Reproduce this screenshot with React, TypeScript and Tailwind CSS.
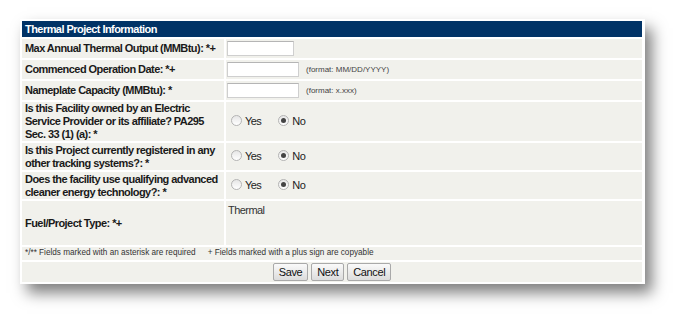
import type { ReactNode } from "react";

const cell = "bg-[#f1f1ec] flex items-center";

function Label({ children }: { children: ReactNode }) {
  return (
    <div className={`${cell} pl-[3px] pr-[4px] font-bold text-[11px] tracking-[-0.55px] leading-[13px] text-[#1a1a1a]`}>
      {children}
    </div>
  );
}

function TextBox({ width, hint }: { width: string; hint?: string }) {
  return (
    <div className={`${cell} pl-[1px] gap-[7px]`}>
      <div className={`${width} h-[15px] bg-white border border-[#cfcfcf] border-t-[#b5b5b5]`} />
      {hint && <span className="text-[8px] text-[#444]">{hint}</span>}
    </div>
  );
}

function Radio({ checked, label }: { checked?: boolean; label: string }) {
  return (
    <span className="flex items-center gap-[3px]">
      <span className="w-[11px] h-[11px] rounded-full border border-[#b4b4b4] bg-gradient-to-b from-[#e6e6e6] to-white flex items-center justify-center -mt-[2px]">
        {checked && <span className="w-[5px] h-[5px] rounded-full bg-[#444]" />}
      </span>
      <span className="text-[11px] tracking-[-0.55px] text-[#222]">{label}</span>
    </span>
  );
}

function YesNo() {
  return (
    <div className={`${cell} pl-[5px] gap-[17px]`}>
      <Radio label="Yes" />
      <Radio label="No" checked />
    </div>
  );
}

function Btn({ children }: { children: ReactNode }) {
  return (
    <button className="h-[18px] px-[5px] text-[11px] tracking-[-0.4px] leading-none text-[#111] border border-[#a9a9a9] rounded-[2px] bg-gradient-to-b from-[#fafafa] to-[#dcdcdc]">
      {children}
    </button>
  );
}

export default function App() {
  return (
    <div className="w-[687px] h-[327px] bg-white pl-[20px] pt-[19px] font-['Liberation_Sans',Arial,sans-serif]">
      <div className="w-[625px] bg-white p-[2px] pr-[3px] shadow-[7px_9px_14px_rgba(0,0,0,0.5)]">
        <div className="grid grid-cols-[202px_1fr] grid-rows-[16px_19px_19px_19px_39px_27px_27px_44px_13px_20px] gap-[2px]">
          <div className="col-span-2 bg-[#013366] text-white font-bold text-[11px] tracking-[-0.55px] pl-[3px] flex items-center">
            Thermal Project Information
          </div>

          <Label>Max Annual Thermal Output (MMBtu): *+</Label>
          <TextBox width="w-[67px]" />

          <Label>Commenced Operation Date: *+</Label>
          <TextBox width="w-[72px]" hint="(format: MM/DD/YYYY)" />

          <Label>Nameplate Capacity (MMBtu): *</Label>
          <TextBox width="w-[72px]" hint="(format: x.xxx)" />

          <Label>Is this Facility owned by an Electric Service Provider or its affiliate? PA295 Sec. 33 (1) (a): *</Label>
          <YesNo />

          <Label>Is this Project currently registered in any other tracking systems?: *</Label>
          <YesNo />

          <Label>Does the facility use qualifying advanced cleaner energy technology?: *</Label>
          <YesNo />

          <Label>Fuel/Project Type: *+</Label>
          <div className="bg-[#f1f1ec] pl-[2px] pt-[1px] text-[11px] tracking-[-0.55px] text-[#333]">Thermal</div>

          <div className="col-span-2 bg-[#f1f1ec] flex items-center pl-[3px] gap-[12px] text-[8.2px] text-[#333]">
            <span>*/** Fields marked with an asterisk are required</span>
            <span>+ Fields marked with a plus sign are copyable</span>
          </div>

          <div className="col-span-2 bg-[#f1f1ec] flex items-center justify-center gap-[3px]">
            <Btn>Save</Btn>
            <Btn>Next</Btn>
            <Btn>Cancel</Btn>
          </div>
        </div>
      </div>
    </div>
  );
}
